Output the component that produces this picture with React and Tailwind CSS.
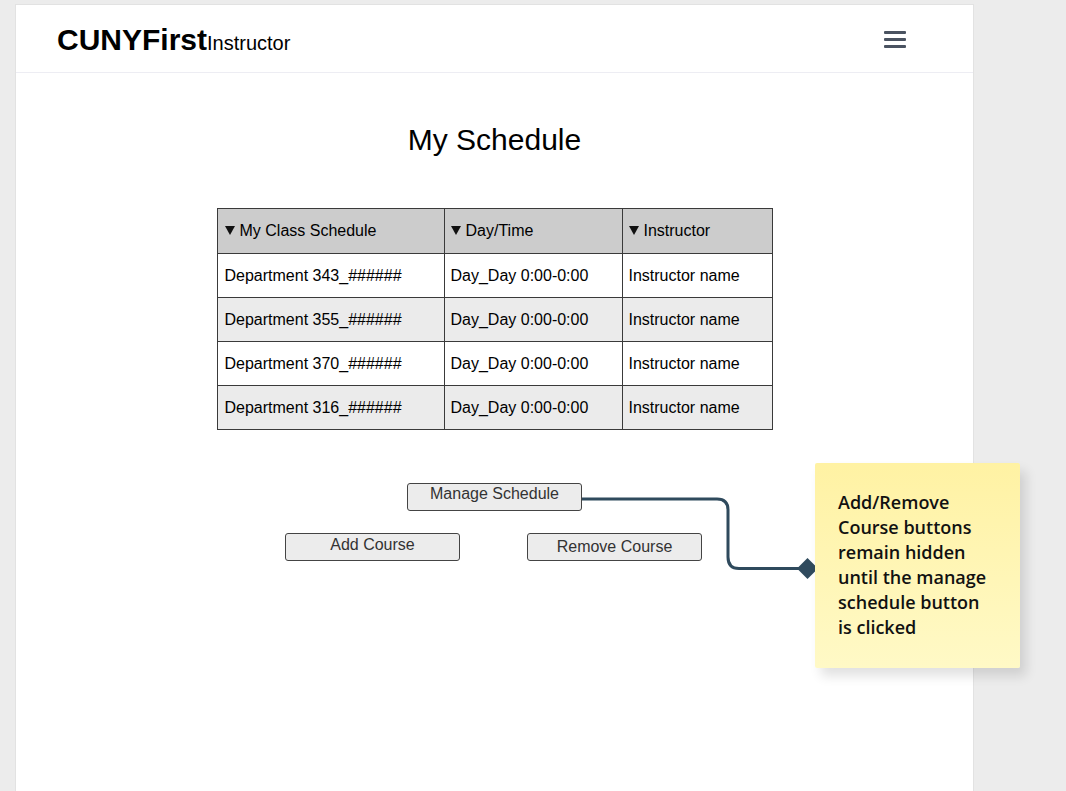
import React from "react";

const rows = [
  ["Department 343_######", "Day_Day 0:00-0:00", "Instructor name"],
  ["Department 355_######", "Day_Day 0:00-0:00", "Instructor name"],
  ["Department 370_######", "Day_Day 0:00-0:00", "Instructor name"],
  ["Department 316_######", "Day_Day 0:00-0:00", "Instructor name"],
];

function Tri() {
  return (
    <svg width="10" height="9" viewBox="0 0 10 9" className="inline-block mr-[5px] mb-[2px]">
      <polygon points="0,0 10,0 5,9" fill="#111" />
    </svg>
  );
}

export default function App() {
  const font = { fontFamily: '"Liberation Sans", Arial, sans-serif' };
  return (
    <div className="relative min-h-[791px] h-[791px] overflow-hidden bg-[#ececec]" style={font}>
      <div className="ml-[15px] mt-[4px] w-[959px] h-[800px] bg-white border border-[#e2e2e2]">
        <header className="h-[68px] flex items-center justify-between pl-[41px] pr-[67px] border-b border-[#ededf3]">
          <div className="flex items-baseline text-black pt-[2px]">
            <span className="text-[30px] font-bold leading-none">CUNYFirst</span>
            <span className="text-[20px] leading-none">Instructor</span>
          </div>
          <div className="flex flex-col gap-[4px] w-[22px] mt-[2px]">
            <span className="block h-[3px] bg-[#4a5361] rounded-[1px]" />
            <span className="block h-[3px] bg-[#4a5361] rounded-[1px]" />
            <span className="block h-[3px] bg-[#4a5361] rounded-[1px]" />
          </div>
        </header>

        <main className="flex flex-col items-center">
          <h1 className="mt-[47px] text-[30px] leading-[40px] text-black">My Schedule</h1>

          <table className="mt-[48px] border-collapse text-[16px] text-black">
            <thead>
              <tr className="bg-[#cccccc] h-[45px]">
                <th className="w-[227px] border border-[#3a3a3a] text-left font-normal pl-[7px]"><Tri />My Class Schedule</th>
                <th className="w-[178px] border border-[#3a3a3a] text-left font-normal pl-[6px]"><Tri />Day/Time</th>
                <th className="w-[150px] border border-[#3a3a3a] text-left font-normal pl-[6px]"><Tri />Instructor</th>
              </tr>
            </thead>
            <tbody>
              {rows.map((r, i) => (
                <tr key={i} className={(i % 2 === 1 ? "bg-[#ebebeb]" : "bg-white") + " h-[44px]"}>
                  <td className="border border-[#3a3a3a] pl-[7px]">{r[0]}</td>
                  <td className="border border-[#3a3a3a] pl-[6px]">{r[1]}</td>
                  <td className="border border-[#3a3a3a] pl-[6px]">{r[2]}</td>
                </tr>
              ))}
            </tbody>
          </table>

          <div className="mt-[53px] flex flex-col items-center">
            <button className="w-[175px] h-[28px] bg-[#ececec] border border-[#444] rounded-[3px] text-[16px] text-[#333] leading-none pb-[6px]">Manage Schedule</button>
            <div className="mt-[22px] flex gap-[67px] ml-[-2px]">
              <button className="w-[175px] h-[28px] bg-[#ececec] border border-[#444] rounded-[3px] text-[16px] text-[#333] leading-none pb-[4px]">Add Course</button>
              <button className="w-[175px] h-[28px] bg-[#ececec] border border-[#444] rounded-[3px] text-[16px] text-[#333] leading-none">Remove Course</button>
            </div>
          </div>
        </main>
      </div>

      <svg className="absolute left-0 top-0 pointer-events-none" width="1066" height="791">
        <path d="M582 499 H717 Q728 499 728 510 V557 Q728 568.5 739 568.5 H800" fill="none" stroke="#2f4a5d" strokeWidth="3" />
        <polygon points="807.5,558 818,568.5 807.5,579 797,568.5" fill="#2f4a5d" />
      </svg>

      <div
        className="absolute left-[815px] top-[463px] w-[205px] h-[205px] rounded-[2px] bg-gradient-to-b from-[#fff2a3] to-[#fff9c6] shadow-[6px_8px_12px_rgba(0,0,0,0.12)] pl-[23px] pt-[27px] text-[18px] leading-[25px] font-semibold text-[#111]"
        style={{ fontFamily: '"Open Sans", sans-serif' }}
      >
        Add/Remove<br />Course buttons<br />remain hidden<br />until the manage<br />schedule button<br />is clicked
      </div>
    </div>
  );
}
